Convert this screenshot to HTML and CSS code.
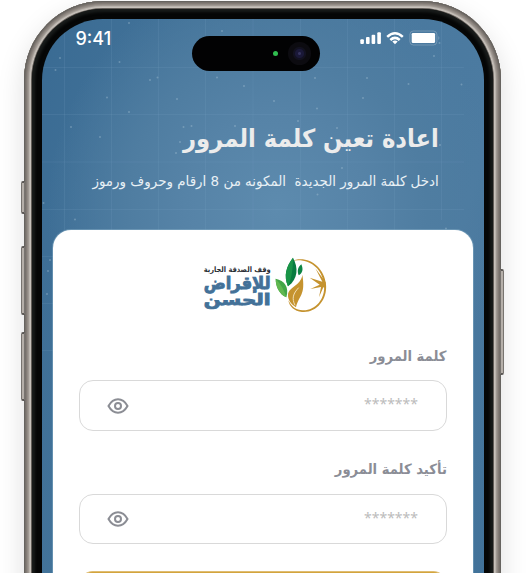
FILE: index.html
```
<!DOCTYPE html>
<html lang="ar" dir="rtl">
<head>
<meta charset="utf-8">
<title>اعادة تعين كلمة المرور</title>
<link rel="stylesheet" href="styles.css">
</head>
<body>
<main class="phone">
  <i class="key key-action"></i><i class="key key-up"></i><i class="key key-down"></i><i class="key key-power"></i>
  <div class="bezel">
    <section class="screen">
      <svg class="sky" viewBox="42 19 442 570" aria-hidden="true">
        <path class="grid" d="M64.500 19V589M111.500 19V589M158.500 19V589M205.500 19V589M253 19V589M300.500 19V589M347.500 19V589M394.500 19V589M441.500 19V220M42 67.500H464M42 114.500H464M42 162H464M42 209.500H464M42 256.500H64M42 303.500H64M42 350.500H64"/>
        <path class="stars" d="M60 58h0M55.500 70h0M129 23h0M119.500 62h0M150 80h0M157.500 77.500h0M107 97.500h0M129 112h0M71 127h0M100 137h0M177 99h0M217 77.500h0M244 86h0M222 31h0M183.500 127h0M191.500 126h0M235 126h0M176 153h0M180 142h0M43.500 203h0M75 219.500h0M50 260h0M48 271h0M47 294h0M315 78h0M367 78h0M408.500 84h0M461.500 84.500h0M434 56h0M439.500 43h0M274 101h0M317 108.500h0M363 98h0M298 121h0M337 128h0M440 145h0M342 168h0M317.500 194.500h0M446 228.500h0"/>
      </svg>
      <header class="status" dir="ltr">
        <span class="time">9:41</span>
        <span class="island"><i class="led"></i><i class="lens"></i></span>
        <svg class="signals" viewBox="360 28 80 20" aria-hidden="true">
          <g fill="#fff"><rect x="360.300" y="39.300" width="3.600" height="4.700" rx="1"/><rect x="366" y="37" width="3.600" height="7" rx="1"/><rect x="371.600" y="34.700" width="3.600" height="9.300" rx="1"/><rect x="377.300" y="32.300" width="3.600" height="11.700" rx="1"/></g>
          <g fill="none" stroke="#fff" stroke-width="2.500"><path d="M387.200 36.800Q395 29.700 402.800 36.800"/><path d="M390.300 40Q395 35.800 399.700 40"/></g>
          <path d="M395 44.300L392.300 41.500Q395 39.500 397.700 41.500Z" fill="#fff"/>
          <rect x="409.900" y="31" width="27" height="14" rx="3.500" fill="none" stroke="#fff" stroke-opacity=".22"/>
          <rect x="411.700" y="32.900" width="23.400" height="10.200" rx="1.300" fill="#fff"/>
          <path d="M438.300 36Q440.500 38 438.300 40Z" fill="#fff" fill-opacity=".25"/>
        </svg>
      </header>
      <div class="intro">
        <h1><span class="fit fit-title">اعادة تعين كلمة المرور</span></h1>
        <p><span class="fit fit-sub">ادخل كلمة المرور الجديدة&nbsp; المكونه من 8 ارقام وحروف ورموز</span></p>
      </div>
      <form class="card">
        <svg class="logo" viewBox="0 0 450 240" role="img">
          <g direction="rtl" text-anchor="start" font-family="DejaVu Sans" font-weight="700">
            <text x="242" y="80" font-size="23" fill="#292d33" textLength="201" lengthAdjust="spacingAndGlyphs">وقف الصدقة الجارية</text>
            <text x="242" y="132" font-size="52" fill="#437198" stroke="#437198" stroke-width="2.500" textLength="201" lengthAdjust="spacingAndGlyphs">للإقراض</text>
            <text x="242" y="180" font-size="46" fill="#437198" stroke="#437198" stroke-width="2.500" textLength="201" lengthAdjust="spacingAndGlyphs">الحسن</text>
          </g>
          <g fill="#c5932f">
            <path d="M304 48C352 29 402 63 408 118C413 166 377 205 336 201C313 199 298 185 295 166C305 186 318 195 338 196C374 198 407 163 402 120C397 67 354 37 304 48Z"/>
            <path d="M337 89C342 119 340 136 334 149C327 164 321 171 318 187C303 177 293 164 294 149C296 125 334 121 337 89Z"/>
            <path d="M407 112L376 70L397 110L359 98L389 119L361 132L393 126L387 157L400 127L408 130Z"/>
          </g>
          <path d="M326 128C309 146 305 160 315 181" fill="none" stroke="#f2dfb6" stroke-width="3"/>
          <path d="M309 38C325 68 325 101 294 124C280 91 289 64 309 38Z" fill="#087c40"/>
          <path d="M309 38C309 76 303 105 294 124C280 91 289 64 309 38Z" fill="#199447"/>
          <path d="M257 101C284 107 298 126 289 157C267 147 257 124 257 101Z" fill="#41a647"/>
          <path d="M257 101C274 119 283 137 289 157C267 147 257 124 257 101Z" fill="#60b750"/>
          <path d="M334 58C341 74 337 85 326 91C320 77 325 65 334 58Z" fill="#0c8544"/>
        </svg>
        <label class="label"><span class="fit fit-label">كلمة المرور</span></label>
        <div class="field"><span class="stars-text">*******</span>
          <svg class="eye" viewBox="0 0 22 18"><path d="M1.500 9C4 4.500 7.500 2.300 11 2.300S18 4.500 20.500 9C18 13.500 14.500 15.700 11 15.700S4 13.500 1.500 9Z"/><circle cx="11" cy="9" r="3"/></svg>
        </div>
        <label class="label label-confirm"><span class="fit fit-label">تأكيد كلمة المرور</span></label>
        <div class="field field-confirm"><span class="stars-text">*******</span>
          <svg class="eye" viewBox="0 0 22 18"><path d="M1.500 9C4 4.500 7.500 2.300 11 2.300S18 4.500 20.500 9C18 13.500 14.500 15.700 11 15.700S4 13.500 1.500 9Z"/><circle cx="11" cy="9" r="3"/></svg>
        </div>
        <div class="submit"></div>
      </form>
    </section>
  </div>
</main>
</body>
</html>
```
FILE: styles.css
```
* { box-sizing: border-box; }
html, body { margin: 0; height: 573px; overflow: hidden; background: #fff; }
body { direction: ltr; font-family: "DejaVu Sans", sans-serif; }
.phone {
  position: relative; width: 477px; height: 760px; margin: .5px 0 0 24px; padding: 8px;
  border-radius: 79px; background: #716c66;
  box-shadow: 0 10px 28px #0002, inset 0 0 0 1px #66635f, inset 0 0 0 2px #77716c, inset 0 0 0 3px #837c76, inset 0 0 0 4px #928b85, inset 0 0 0 5px #a09993, inset 0 0 0 6px #bbb5ae, inset 0 0 0 7px #c7c1bb, inset 0 0 0 8px #625d58;
}
.key { position: absolute; width: 4px; left: -3.500px; border-radius: 2px 0 0 2px; border: 1px solid #77736f; border-top: 2px solid #5b5855; border-bottom: 2px solid #5b5855; background: #b5afa9; }
.key-action { top: 180px; height: 33px; }
.key-up { top: 245px; height: 69px; }
.key-down { top: 331px; height: 69px; }
.key-power { left: auto; right: -3px; top: 268px; height: 106px; border-radius: 0 2px 2px 0; }
.bezel { height: 744px; padding: 10.500px 9.500px 10px 10px; border-radius: 71px; background: #050606; box-shadow: inset 0 0 3px 3px #191c1b; }
.screen {
  position: relative; height: 720px; overflow: hidden; border-radius: 61px; display: flex; flex-direction: column;
  background: radial-gradient(ellipse 230px 240px at 235px 190px, #5d8bae 0%, #5683a7 40%, #4f7da1 65%, #4f7da100 100%), linear-gradient(105deg, #3a6b93 0%, #45759b 30%, #4c7ba1 75%, #3d6e96 100%);
}
.sky { position: absolute; left: 0; top: 0; width: 442px; height: 570px; }
.grid { fill: none; stroke: #7eabc9; stroke-opacity: .15; }
.stars { fill: none; stroke: #b8d0e0; stroke-opacity: .34; stroke-width: 2; stroke-linecap: round; }
.status { position: relative; height: 88px; flex: none; display: flex; justify-content: space-between; padding: 9px 43.500px 0 33.500px; }
.time { font: 500 18px/22px Inter, sans-serif; color: #fff; }
.island { width: 128px; height: 35px; margin: 8px 0 0 40px; border-radius: 18px; background: #020203; display: flex; align-items: center; justify-content: flex-end; gap: 10px; padding-right: 9px; }
.led { width: 5px; height: 5px; border-radius: 50%; background: #30bd4f; }
.lens { width: 23px; height: 23px; border-radius: 50%; background: radial-gradient(circle, #35335d 0 1px, #1a1838 2px 4px, #121120 5px 6px, #0c0b10 7px); }
.signals { width: 80px; height: 20px; }
.intro { position: relative; direction: rtl; height: 123px; flex: none; padding-right: 44.500px; }
h1, p { margin: 0; white-space: nowrap; }
h1 { height: 46px; padding-top: 15px; font-size: 25px; line-height: 34px; color: #ececec; }
p { padding-top: 17px; font-size: 14px; line-height: 22px; color: #e8f0f5; }
.fit { display: inline-block; transform-origin: right center; }
.fit-title { transform: scaleX(.908); }
.fit-sub { transform: scaleX(.96); }
.fit-label { transform: scaleX(.943); }
.card { position: relative; display: flex; flex-direction: column; flex: 1 0 500px; margin: 0 10.500px 0 11px; padding: 15px 26px 0 26px; border-radius: 18px 18px 0 0; background: #fff; box-shadow: 0 0 0 1px #8bb1ca77; direction: rtl; }
.logo { direction: ltr; width: 150px; height: 80px; margin-right: 107px; flex: none; }
.label { height: 55px; padding-top: 20px; line-height: 22px; font-size: 14px; font-weight: 700; color: #8b8d96; white-space: nowrap; flex: none; }
.field { height: 51px; flex: none; border: 1px solid #d9d9d9; border-radius: 14px; display: flex; align-items: center; justify-content: space-between; padding: 0 28px 0 27px; }
.label-confirm { height: 63px; padding-top: 27px; }
.field-confirm { height: 50px; }
.stars-text { direction: ltr; padding-bottom: 3px; font: 14px/20px "Noto Sans", sans-serif; color: #bcbcbc; }
.eye { width: 22px; height: 18px; fill: none; stroke: #8b8d94; stroke-width: 2; }
.submit { height: 58px; margin-top: 27px; border-radius: 14px; background: #d3a43c; flex: none; border-top: 1px solid #dfbd73; }
```
